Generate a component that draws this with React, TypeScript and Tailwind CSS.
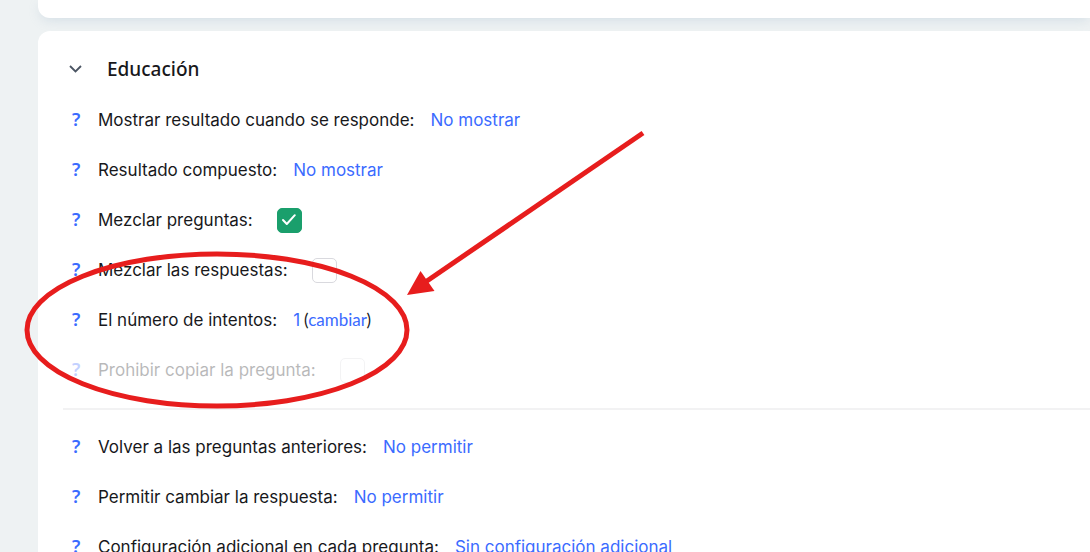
import type { ReactNode } from 'react';

interface RowProps {
  children: ReactNode;
  disabled?: boolean;
}

function Row({ children, disabled }: RowProps) {
  return (
    <div className={`flex h-[50px] items-center ${disabled ? 'opacity-30' : ''}`}>
      <button
        type="button"
        disabled={disabled}
        className="w-[35px] shrink-0 pb-0.5 pl-[9px] text-left font-['Noto_Sans',sans-serif] text-lg leading-6 font-semibold text-[#3b6bff]"
      >
        ?
      </button>
      {children}
    </div>
  );
}

function LinkRow({ label, value }: { label: string; value: string }) {
  return (
    <Row>
      <span>{label}</span>
      <a href="#" className="ml-4 text-[#3b6bff]">
        {value}
      </a>
    </Row>
  );
}

interface CheckRowProps {
  id: string;
  label: string;
  checked?: boolean;
  disabled?: boolean;
}

function CheckRow({ id, label, checked, disabled }: CheckRowProps) {
  return (
    <Row disabled={disabled}>
      <label htmlFor={id}>{label}</label>
      <span className="relative ml-6 flex">
        <input
          id={id}
          type="checkbox"
          defaultChecked={checked}
          disabled={disabled}
          className="peer size-[25px] appearance-none rounded-[5px] border border-[#d9d9de] bg-white checked:border-[#1a9f6c] checked:bg-[#1a9f6c]"
        />
        <svg
          viewBox="0 0 25 25"
          className="pointer-events-none absolute inset-0 hidden size-[25px] peer-checked:block"
          fill="none"
          stroke="white"
          strokeWidth="2"
          strokeLinecap="round"
          strokeLinejoin="round"
        >
          <path d="M6 12 L9.800 16 L17.800 7.200" />
        </svg>
      </span>
    </Row>
  );
}

function Annotation() {
  return (
    <svg
      width="660"
      height="420"
      viewBox="0 0 660 420"
      className="pointer-events-none absolute top-0 left-0"
      aria-hidden="true"
    >
      <ellipse cx="217" cy="330" rx="190" ry="76" fill="none" stroke="#e71d1d" strokeWidth="5" />
      <path d="M643 133 L424 283" stroke="#e71d1d" strokeWidth="5" />
      <path d="M407 295 L420.500 271 L434.500 291 Z" fill="#e71d1d" />
    </svg>
  );
}

export default function App() {
  return (
    <main className="relative h-screen overflow-hidden bg-[#eef2f3] pl-[38px] font-['Inter',sans-serif] text-[17px] leading-6 text-[#18181b]">
      <div className="h-[18px] rounded-bl-xl bg-white shadow-[0_4px_12px_-2px_rgba(150,175,200,0.3)]" />

      <section className="relative mt-[13px] rounded-tl-xl bg-white pt-3 pb-6 pl-[25px]">
        <h2 className="flex h-[52px] items-center font-['Noto_Sans',sans-serif] text-[19px] font-medium">
          <button type="button" aria-label="Educación" className="mr-[25px] ml-[6px]">
            <svg width="13" height="8" viewBox="0 0 13 8" fill="none" stroke="#4b5563" strokeWidth="1.8">
              <path d="M1 1 L6.500 6.500 L12 1" />
            </svg>
          </button>
          Educación
        </h2>

        <LinkRow label="Mostrar resultado cuando se responde:" value="No mostrar" />
        <LinkRow label="Resultado compuesto:" value="No mostrar" />
        <CheckRow id="mix-questions" label="Mezclar preguntas:" checked />
        <CheckRow id="mix-answers" label="Mezclar las respuestas:" />
        <Row>
          <span>El número de intentos:</span>
          <span className="ml-4 text-[#3b6bff]">1</span>
          <span className="ml-1 font-['Lato',sans-serif]">
            (
            <a href="#" className="text-[#3b6bff]">
              cambiar
            </a>
            )
          </span>
        </Row>
        <CheckRow id="forbid-copy" label="Prohibir copiar la pregunta:" disabled />

        <hr className="mt-[13px] mb-3 border-t-2 border-[#f2f2f3]" />

        <LinkRow label="Volver a las preguntas anteriores:" value="No permitir" />
        <LinkRow label="Permitir cambiar la respuesta:" value="No permitir" />
        <LinkRow label="Configuración adicional en cada pregunta:" value="Sin configuración adicional" />
      </section>

      <Annotation />
    </main>
  );
}
